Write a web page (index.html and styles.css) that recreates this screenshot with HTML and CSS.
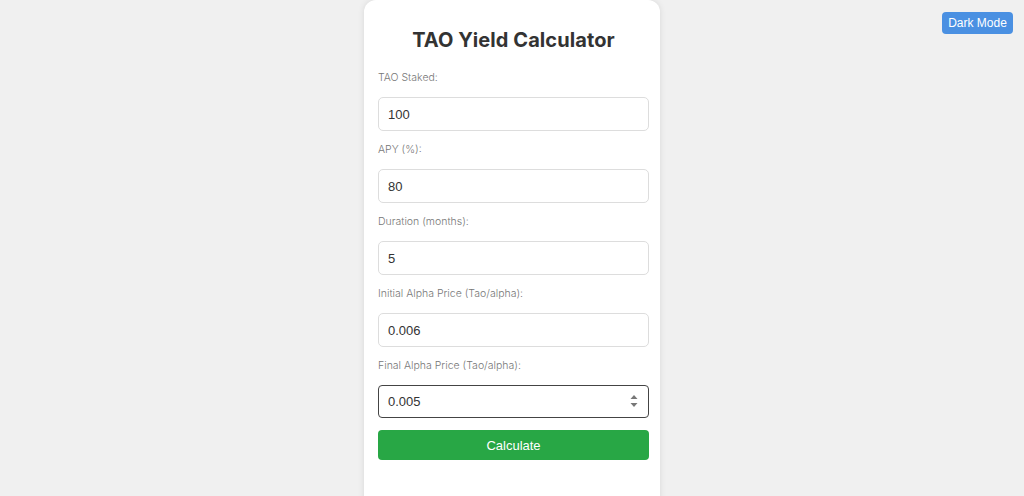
FILE: index.html
```html
<!DOCTYPE html>
<html lang="en">
<head>
<meta charset="utf-8">
<title>TAO Yield Calculator</title>
<link rel="stylesheet" href="styles.css">
</head>
<body>
<button class="mode-btn" type="button">Dark Mode</button>
<main class="card">
  <h1 class="title">TAO Yield Calculator</h1>
  <div class="field">
    <label class="label" for="staked">TAO Staked:</label>
    <input class="input" id="staked" type="text" value="100">
  </div>
  <div class="field">
    <label class="label" for="apy">APY (%):</label>
    <input class="input" id="apy" type="text" value="80">
  </div>
  <div class="field">
    <label class="label" for="dur">Duration (months):</label>
    <input class="input" id="dur" type="text" value="5">
  </div>
  <div class="field">
    <label class="label" for="init">Initial Alpha Price (Tao/alpha):</label>
    <input class="input" id="init" type="text" value="0.006">
  </div>
  <div class="field">
    <label class="label" for="final">Final Alpha Price (Tao/alpha):</label>
    <div class="input-wrap">
      <input class="input input-focus" id="final" type="text" value="0.005">
      <svg class="spin" width="8" height="14" viewBox="0 0 8 14"><path d="M4 1 L7.5 5 L0.5 5 Z" fill="#777"/><path d="M0.5 9 L7.5 9 L4 13 Z" fill="#777"/></svg>
    </div>
  </div>
  <button class="calc-btn" type="button">Calculate</button>
</main>
</body>
</html>
```
FILE: styles.css
```css
html, body {
  margin: 0;
  padding: 0;
}
body {
  background: #f0f0f0;
  height: 496px;
  overflow: hidden;
  position: relative;
  font-family: "Inter", "Liberation Sans", sans-serif;
}
.mode-btn {
  position: absolute;
  top: 12px;
  right: 11px;
  width: 71px;
  height: 22px;
  border: none;
  border-radius: 4px;
  background: #4a90e2;
  color: #fff;
  font-family: "Liberation Sans", Arial, sans-serif;
  font-size: 12px;
  padding: 0;
}
.card {
  box-sizing: border-box;
  width: 296px;
  min-height: 520px;
  margin: 0 auto;
  background: #fff;
  border-radius: 12px;
  box-shadow: 0 0 6px rgba(0, 0, 0, 0.1);
  padding: 25px 11px 0 14px;
  display: flex;
  flex-direction: column;
}
.title {
  margin: 0 0 14px;
  font-size: 20px;
  line-height: 30px;
  font-weight: 700;
  color: #333;
  text-align: center;
  letter-spacing: 0.1px;
}
.field {
  display: flex;
  flex-direction: column;
  margin-bottom: 10px;
}
.label {
  font-size: 10.5px;
  line-height: 16px;
  font-weight: 300;
  color: #777;
  margin-top: 1px;
  margin-bottom: 11px;
}
.input-wrap {
  position: relative;
}
.input {
  box-sizing: border-box;
  width: 271px;
  height: 34px;
  border: 1px solid #ddd;
  border-radius: 5px;
  padding: 0 9px;
  font-family: "Liberation Sans", Arial, sans-serif;
  font-size: 13px;
  color: #333;
  background: #fff;
  outline: none;
}
.input-focus {
  border: 1.5px solid #444;
  border-radius: 4px;
  height: 33px;
}
.spin {
  position: absolute;
  right: 11px;
  top: 9px;
}
.calc-btn {
  width: 271px;
  height: 30px;
  margin-top: 2px;
  border: none;
  border-radius: 4px;
  background: #28a745;
  color: #fff;
  font-family: "Liberation Sans", Arial, sans-serif;
  font-size: 13px;
  padding: 0;
}
```
